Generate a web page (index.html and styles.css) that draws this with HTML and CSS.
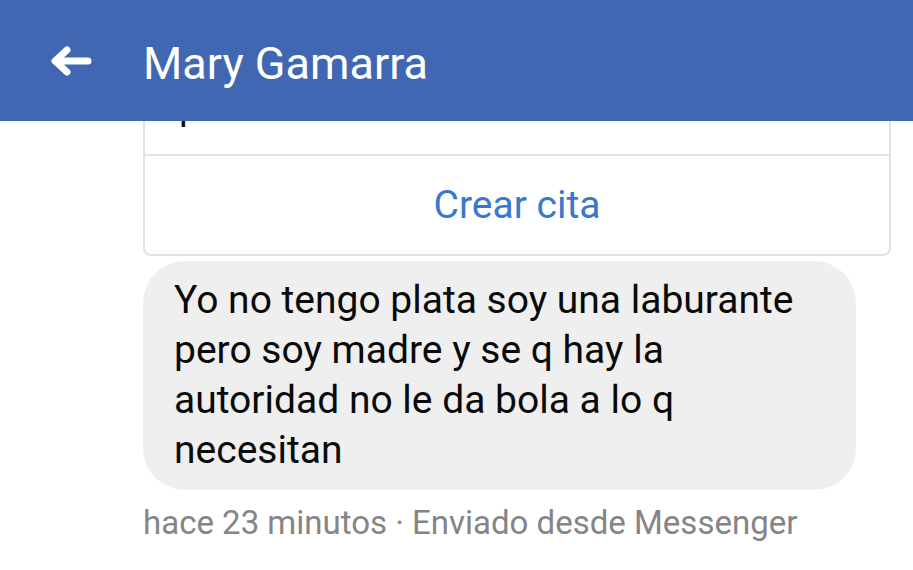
FILE: index.html
```html
<!DOCTYPE html>
<html lang="es">
<head>
    <meta charset="UTF-8">
    <meta name="viewport" content="width=device-width, initial-scale=1.0">
    <title>Mary Gamarra</title>
    <link rel="stylesheet" href="styles.css">
</head>
<body>
    <header class="topbar">
        <button class="back-btn" aria-label="Volver">
            <svg width="44" height="32" viewBox="0 0 44 32">
                <path d="M39 16H8M18 5L6 16l12 11" fill="none" stroke="#fff" stroke-width="7" stroke-linecap="round" stroke-linejoin="round"/>
            </svg>
        </button>
        <h1 class="title">Mary Gamarra</h1>
    </header>

    <main class="thread">
        <div class="card">
            <div class="card-body">puede ser</div>
            <div class="card-action">Crear cita</div>
        </div>

        <div class="bubble">
            Yo no tengo plata soy una laburante pero soy madre y se q hay la autoridad no le da bola a lo q necesitan
        </div>

        <div class="meta">hace 23 minutos · Enviado desde Messenger</div>
    </main>
</body>
</html>
```

FILE: styles.css
```css
body {
    margin: 0;
    font-family: Roboto, "Noto Sans", sans-serif;
    background: #fff;
    color: #111;
    overflow: hidden;
}
.topbar {
    height: 121px;
    background-color: #4267b2;
    display: flex;
    align-items: center;
}
.back-btn {
    background: none;
    border: none;
    padding: 0;
    margin-left: 49px;
    width: 44px;
    height: 32px;
}
.title {
    margin: 5px 0 0 50px;
    color: #fff;
    font-size: 45px;
    font-weight: 400;
}
/* scrolled message list, top of the card is under the bar */
.thread {
    height: calc(100vh - 121px);
    overflow: hidden;
    padding: 0 22px 0 143px;
}
.card {
    margin-top: -58px;
    border: 2px solid #e2e2e2;
    border-radius: 8px;
}
.card-body {
    height: 91px;
    box-sizing: border-box;
    padding: 19px 0 0 34px;
    font-size: 38px;
    line-height: 44px;
    white-space: nowrap;
    overflow: hidden;
    border-bottom: 2px solid #e2e2e2;
}
.card-action {
    height: 98px;
    line-height: 98px;
    text-align: center;
    color: #3a78cf;
    font-size: 39px;
}
.bubble {
    margin-top: 5px;
    width: 713px;
    box-sizing: border-box;
    padding: 14px 31px 15px;
    background: #efefef;
    border-radius: 42px;
    font-size: 39px;
    line-height: 50px;
    color: #0a0a0a;
}
.meta {
    margin-top: 14px;
    font-size: 33px;
    line-height: 38px;
    color: #858585;
}
```
